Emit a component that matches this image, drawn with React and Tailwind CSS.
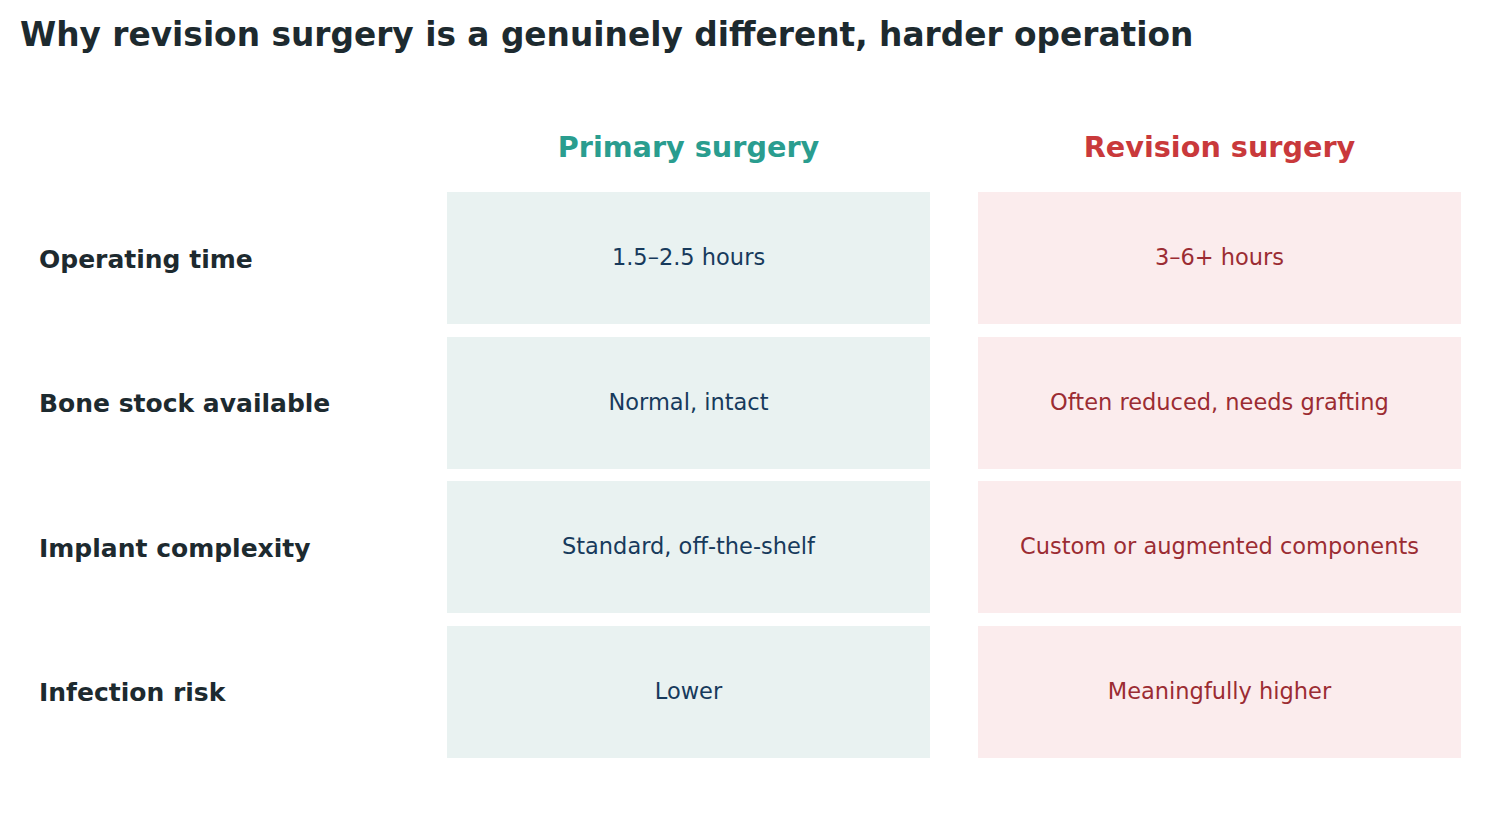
const rows = [
  ['Operating time', '1.5–2.5 hours', '3–6+ hours'],
  ['Bone stock available', 'Normal, intact', 'Often reduced, needs grafting'],
  ['Implant complexity', 'Standard, off-the-shelf', 'Custom or augmented components'],
  ['Infection risk', 'Lower', 'Meaningfully higher'],
];

export default function App() {
  return (
    <div className="w-[1500px] h-[821px] bg-white font-['DejaVu_Sans',sans-serif] overflow-hidden">
      <h1 className="pl-[20px] pt-[15px] text-[32.8px] leading-[40px] font-bold text-[#1d2a2f]">
        Why revision surgery is a genuinely different, harder operation
      </h1>

      <div className="mt-[75px] pl-[39px] grid grid-cols-[360px_483px_483px] gap-x-12">
        <div />
        <div className="text-center text-[28.7px] leading-[34px] font-bold text-[#2a9d8f]">Primary surgery</div>
        <div className="text-center text-[28.7px] leading-[34px] font-bold text-[#c9393b]">Revision surgery</div>
      </div>

      <div className="mt-[28px] pl-[39px] grid grid-cols-[360px_483px_483px] gap-x-12 gap-y-[12.5px]">
        {rows.map(([label, primary, revision]) => (
          <div key={label} className="contents">
            <div className="flex items-center pt-[3px] text-[25px] font-bold text-[#1d2a2f]">{label}</div>
            <div className="h-[132px] flex items-center justify-center bg-[#e9f2f1] text-[22.5px] text-[#173a5c]">
              {primary}
            </div>
            <div className="h-[132px] flex items-center justify-center bg-[#fbeced] text-[22.5px] text-[#9b2c33]">
              {revision}
            </div>
          </div>
        ))}
      </div>
    </div>
  );
}
